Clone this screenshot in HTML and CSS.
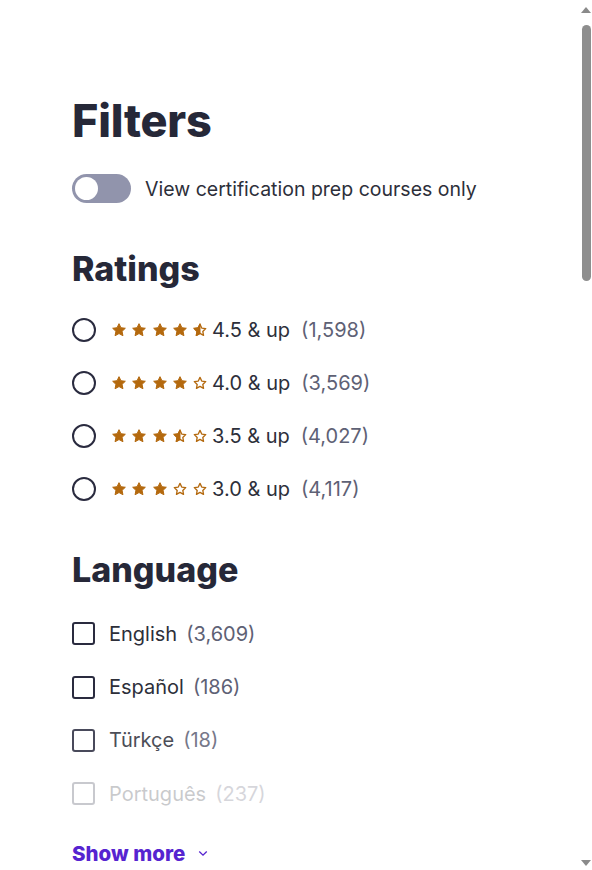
FILE: index.html
```html
<!DOCTYPE html>
<html lang="en">
<head>
<meta charset="utf-8">
<title>Filters</title>
<link rel="stylesheet" href="styles.css">
</head>
<body>
<div class="panel">
  <h2 class="title">Filters</h2>
  <label class="toggle-row">
    <span class="toggle"><span class="knob"></span></span>
    <span class="toggle-text">View certification prep courses only</span>
  </label>

  <h3 class="section-title ratings-title">Ratings</h3>
  <ul class="list">
    <li class="row">
      <span class="radio"></span>
      <span class="stars">
        <svg class="star" viewBox="0 0 24 24"><path class="full" d="M12 2.5l2.9 6.1 6.6.8-4.9 4.6 1.3 6.6L12 17.3l-5.9 3.3 1.3-6.6-4.9-4.6 6.6-.8z"/></svg>
        <svg class="star" viewBox="0 0 24 24"><path class="full" d="M12 2.5l2.9 6.1 6.6.8-4.9 4.6 1.3 6.6L12 17.3l-5.9 3.3 1.3-6.6-4.9-4.6 6.6-.8z"/></svg>
        <svg class="star" viewBox="0 0 24 24"><path class="full" d="M12 2.5l2.9 6.1 6.6.8-4.9 4.6 1.3 6.6L12 17.3l-5.9 3.3 1.3-6.6-4.9-4.6 6.6-.8z"/></svg>
        <svg class="star" viewBox="0 0 24 24"><path class="full" d="M12 2.5l2.9 6.1 6.6.8-4.9 4.6 1.3 6.6L12 17.3l-5.9 3.3 1.3-6.6-4.9-4.6 6.6-.8z"/></svg>
        <svg class="star" viewBox="0 0 24 24"><path class="empty" d="M12 3.6l2.6 5.5 6 .8-4.4 4.2 1.1 6L12 17.1l-5.3 3 1.1-6-4.4-4.2 6-.8z"/><path class="full" d="M12 2.5v14.8l-5.9 3.3 1.3-6.6-4.9-4.6 6.6-.8z"/></svg>
      </span>
      <span class="label">4.5 &amp; up</span>
      <span class="count">(1,598)</span>
    </li>
    <li class="row">
      <span class="radio"></span>
      <span class="stars">
        <svg class="star" viewBox="0 0 24 24"><path class="full" d="M12 2.5l2.9 6.1 6.6.8-4.9 4.6 1.3 6.6L12 17.3l-5.9 3.3 1.3-6.6-4.9-4.6 6.6-.8z"/></svg>
        <svg class="star" viewBox="0 0 24 24"><path class="full" d="M12 2.5l2.9 6.1 6.6.8-4.9 4.6 1.3 6.6L12 17.3l-5.9 3.3 1.3-6.6-4.9-4.6 6.6-.8z"/></svg>
        <svg class="star" viewBox="0 0 24 24"><path class="full" d="M12 2.5l2.9 6.1 6.6.8-4.9 4.6 1.3 6.6L12 17.3l-5.9 3.3 1.3-6.6-4.9-4.6 6.6-.8z"/></svg>
        <svg class="star" viewBox="0 0 24 24"><path class="full" d="M12 2.5l2.9 6.1 6.6.8-4.9 4.6 1.3 6.6L12 17.3l-5.9 3.3 1.3-6.6-4.9-4.6 6.6-.8z"/></svg>
        <svg class="star" viewBox="0 0 24 24"><path class="empty" d="M12 3.6l2.6 5.5 6 .8-4.4 4.2 1.1 6L12 17.1l-5.3 3 1.1-6-4.4-4.2 6-.8z"/></svg>
      </span>
      <span class="label">4.0 &amp; up</span>
      <span class="count">(3,569)</span>
    </li>
    <li class="row">
      <span class="radio"></span>
      <span class="stars">
        <svg class="star" viewBox="0 0 24 24"><path class="full" d="M12 2.5l2.9 6.1 6.6.8-4.9 4.6 1.3 6.6L12 17.3l-5.9 3.3 1.3-6.6-4.9-4.6 6.6-.8z"/></svg>
        <svg class="star" viewBox="0 0 24 24"><path class="full" d="M12 2.5l2.9 6.1 6.6.8-4.9 4.6 1.3 6.6L12 17.3l-5.9 3.3 1.3-6.6-4.9-4.6 6.6-.8z"/></svg>
        <svg class="star" viewBox="0 0 24 24"><path class="full" d="M12 2.5l2.9 6.1 6.6.8-4.9 4.6 1.3 6.6L12 17.3l-5.9 3.3 1.3-6.6-4.9-4.6 6.6-.8z"/></svg>
        <svg class="star" viewBox="0 0 24 24"><path class="empty" d="M12 3.6l2.6 5.5 6 .8-4.4 4.2 1.1 6L12 17.1l-5.3 3 1.1-6-4.4-4.2 6-.8z"/><path class="full" d="M12 2.5v14.8l-5.9 3.3 1.3-6.6-4.9-4.6 6.6-.8z"/></svg>
        <svg class="star" viewBox="0 0 24 24"><path class="empty" d="M12 3.6l2.6 5.5 6 .8-4.4 4.2 1.1 6L12 17.1l-5.3 3 1.1-6-4.4-4.2 6-.8z"/></svg>
      </span>
      <span class="label">3.5 &amp; up</span>
      <span class="count">(4,027)</span>
    </li>
    <li class="row">
      <span class="radio"></span>
      <span class="stars">
        <svg class="star" viewBox="0 0 24 24"><path class="full" d="M12 2.5l2.9 6.1 6.6.8-4.9 4.6 1.3 6.6L12 17.3l-5.9 3.3 1.3-6.6-4.9-4.6 6.6-.8z"/></svg>
        <svg class="star" viewBox="0 0 24 24"><path class="full" d="M12 2.5l2.9 6.1 6.6.8-4.9 4.6 1.3 6.6L12 17.3l-5.9 3.3 1.3-6.6-4.9-4.6 6.6-.8z"/></svg>
        <svg class="star" viewBox="0 0 24 24"><path class="full" d="M12 2.5l2.9 6.1 6.6.8-4.9 4.6 1.3 6.6L12 17.3l-5.9 3.3 1.3-6.6-4.9-4.6 6.6-.8z"/></svg>
        <svg class="star" viewBox="0 0 24 24"><path class="empty" d="M12 3.6l2.6 5.5 6 .8-4.4 4.2 1.1 6L12 17.1l-5.3 3 1.1-6-4.4-4.2 6-.8z"/></svg>
        <svg class="star" viewBox="0 0 24 24"><path class="empty" d="M12 3.6l2.6 5.5 6 .8-4.4 4.2 1.1 6L12 17.1l-5.3 3 1.1-6-4.4-4.2 6-.8z"/></svg>
      </span>
      <span class="label">3.0 &amp; up</span>
      <span class="count">(4,117)</span>
    </li>
  </ul>

  <h3 class="section-title language-title">Language</h3>
  <ul class="list lang-list">
    <li class="row"><span class="checkbox"></span><span class="label">English</span><span class="count">(3,609)</span></li>
    <li class="row"><span class="checkbox"></span><span class="label">Español</span><span class="count">(186)</span></li>
    <li class="row fade-1"><span class="checkbox"></span><span class="label">Türkçe</span><span class="count">(18)</span></li>
    <li class="row fade-2"><span class="checkbox"></span><span class="label">Português</span><span class="count">(237)</span></li>
  </ul>
  <button class="show-more">Show more
    <svg class="chev" viewBox="0 0 12 8"><path d="M1.5 1.5L6 6l4.5-4.5"/></svg>
  </button>
</div>

<div class="scrollbar">
  <span class="arrow up"></span>
  <span class="thumb"></span>
  <span class="arrow down"></span>
</div>
</body>
</html>
```

FILE: styles.css
```css
* { box-sizing: border-box; }
html, body { margin: 0; padding: 0; background: #fff; }
body {
  width: 592px;
  height: 870px;
  overflow: hidden;
  font-family: Inter, "Noto Sans", "Liberation Sans", sans-serif;
  color: #2a2b3f;
}
.panel {
  padding: 94px 0 0 72px;
}
.title {
  margin: 0;
  font-size: 45px;
  line-height: 53px;
  font-weight: 800;
  letter-spacing: -0.2px;
  color: #262838;
}
.toggle-row {
  display: flex;
  align-items: center;
  gap: 14px;
  margin-top: 27px;
}
.toggle {
  width: 59px;
  height: 29px;
  border-radius: 15px;
  background: #9194ac;
  display: flex;
  align-items: center;
  padding-left: 3px;
}
.knob {
  width: 23px;
  height: 23px;
  border-radius: 50%;
  background: #fff;
}
.toggle-text {
  font-size: 19.5px;
  color: #2d2f3a;
}
.section-title {
  margin: 0;
  font-size: 34px;
  line-height: 37px;
  font-weight: 800;
  letter-spacing: 0;
  color: #262838;
}
.ratings-title { margin-top: 47px; }
.language-title { margin-top: 36px; }
.list {
  list-style: none;
  margin: 16px 0 0;
  padding: 0;
}
.lang-list { margin-top: 19px; }
.row {
  height: 53px;
  display: flex;
  align-items: center;
  font-size: 20px;
}
.lang-list .row { height: 53.4px; }
.radio {
  width: 24px;
  height: 24px;
  border: 2.5px solid #2a2b3f;
  border-radius: 50%;
  flex: none;
}
.stars {
  display: flex;
  gap: 4.25px;
  margin-left: 15px;
  margin-right: 4px;
}
.star {
  width: 16px;
  height: 16px;
  display: block;
}
.star .full { fill: #b4690e; stroke: #b4690e; stroke-width: 1.5; stroke-linejoin: round; }
.star .empty { fill: none; stroke: #b4690e; stroke-width: 2; stroke-linejoin: round; }
.label { color: #2d2f3a; }
.count { color: #5e6175; margin-left: 11px; }
.lang-list .count { margin-left: 9px; }
.checkbox {
  width: 23px;
  height: 23px;
  border: 2.5px solid #2a2b3f;
  border-radius: 3px;
  flex: none;
  margin-right: 14px;
}
.fade-1 { opacity: 0.85; }
.fade-2 { opacity: 0.25; }
.show-more {
  display: flex;
  align-items: center;
  gap: 13px;
  margin-top: 20px;
  padding: 0;
  border: 0;
  background: none;
  font-family: inherit;
  font-size: 20.5px;
  font-weight: 800;
  color: #5624d0;
}
.chev {
  width: 10px;
  height: 7px;
  fill: none;
  stroke: #5624d0;
  stroke-width: 1.6;
}
.scrollbar {
  position: absolute;
  top: 0;
  right: 0;
  width: 12px;
  height: 870px;
}
.arrow {
  position: absolute;
  left: 1px;
  width: 0;
  height: 0;
  border-left: 5px solid transparent;
  border-right: 5px solid transparent;
}
.arrow.up { top: 7px; border-bottom: 6px solid #8a8a8a; }
.arrow.down { bottom: 4px; border-top: 6px solid #8a8a8a; }
.thumb {
  position: absolute;
  top: 25px;
  left: 2px;
  width: 9px;
  height: 256px;
  border-radius: 5px;
  background: #8e8e8e;
}
```
